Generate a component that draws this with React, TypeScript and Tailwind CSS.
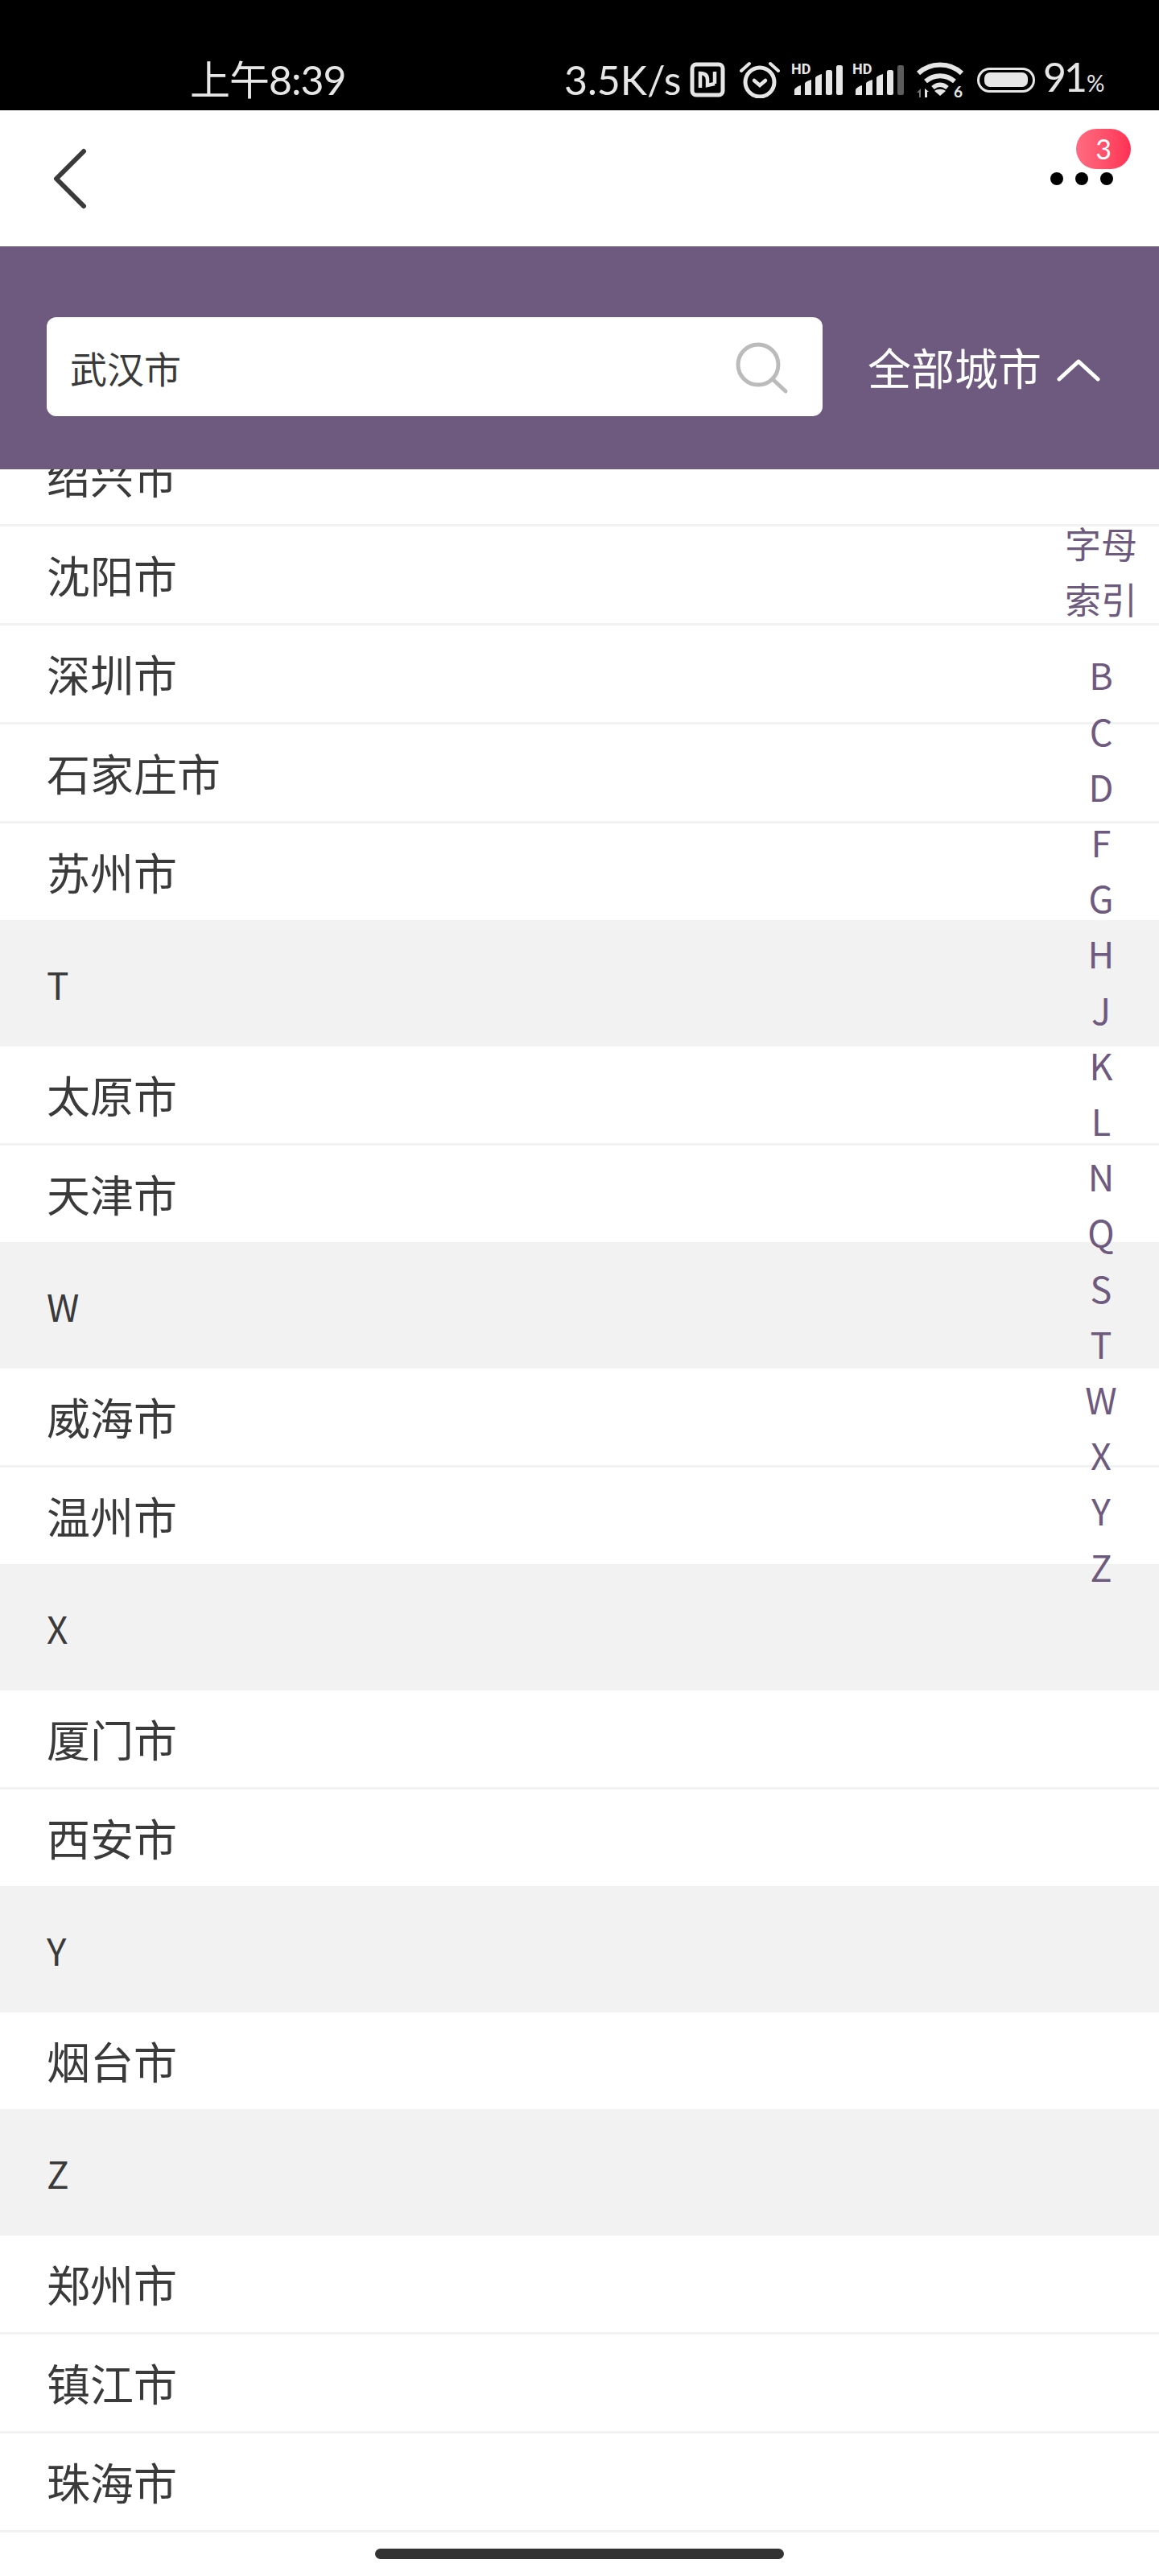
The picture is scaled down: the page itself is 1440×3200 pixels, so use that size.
const sections: { letter?: string; cities: string[] }[] = [
  { cities: ["绍兴市", "沈阳市", "深圳市", "石家庄市", "苏州市"] },
  { letter: "T", cities: ["太原市", "天津市"] },
  { letter: "W", cities: ["威海市", "温州市"] },
  { letter: "X", cities: ["厦门市", "西安市"] },
  { letter: "Y", cities: ["烟台市"] },
  { letter: "Z", cities: ["郑州市", "镇江市", "珠海市"] },
];

const letters = ["B", "C", "D", "F", "G", "H", "J", "K", "L", "N", "Q", "S", "T", "W", "X", "Y", "Z"];

function NfcIcon() {
  return (
    <svg width="44" height="44" viewBox="0 0 44 44" fill="none" stroke="#e6e6e6">
      <rect x="3" y="3" width="38" height="38" rx="5" strokeWidth="5" />
      <path d="M13 32V14c5 0 9 2 9 8v7l9-2M31 12v15" strokeWidth="4.5" />
    </svg>
  );
}

function AlarmIcon() {
  return (
    <svg width="50" height="46" viewBox="0 0 50 46" fill="none" stroke="#e6e6e6" strokeLinecap="round">
      <circle cx="25" cy="26" r="18" strokeWidth="5" />
      <path d="M18 24l7 6 7-6" strokeWidth="4.5" />
      <path d="M2 12L12 3M48 12L38 3" strokeWidth="4" />
    </svg>
  );
}

function SignalIcon({ dim }: { dim?: boolean }) {
  return (
    <svg className="overflow-visible" width="66" height="42" viewBox="0 0 66 42" fill="#e6e6e6">
      <text x="1" y="14" fontSize="18" fontWeight="700" fontFamily="Roboto, sans-serif">HD</text>
      <path d="M5 40v-6c0-2 4-5 8-6v12zM18 40V26c0-2 4-4 8-5v19zM31 40V19c0-2 4-4 8-5v26z" />
      <rect x="44" y="9" width="8" height="31" rx="2.5" />
      <rect x="57" y="3" width="8" height="37" rx="2.5" fill={dim ? "#5c5c5c" : "#e6e6e6"} />
    </svg>
  );
}

function WifiIcon() {
  return (
    <svg className="overflow-visible" width="60" height="46" viewBox="0 0 60 46" fill="none">
      <path d="M3 15C18 1 42 1 57 15" stroke="#e6e6e6" strokeWidth="6" />
      <path d="M12 25c11-9 25-9 36 0" stroke="#e6e6e6" strokeWidth="6" />
      <path d="M21 33c6-5 12-5 18 0" stroke="#e6e6e6" strokeWidth="5.5" />
      <path d="M30 43l-7-6c4-3 10-3 14 0z" fill="#e6e6e6" />
      <path d="M4 45v-6H1l5-5v11z" fill="#777777" />
      <path d="M11 45V34l5 4h-2v7z" fill="#e6e6e6" />
      <text x="47" y="45" fontSize="19" fontWeight="700" fill="#e6e6e6" fontFamily="Lato, sans-serif">6</text>
    </svg>
  );
}

function BatteryIcon() {
  return (
    <div className="flex h-[31px] w-[72px] items-center rounded-[16px] border-[3px] border-[#e6e6e6] px-[6px]">
      <div className="h-[18px] w-full rounded-[7px] bg-[#e6e6e6]" />
    </div>
  );
}

function StatusBar() {
  return (
    <div className="flex h-[137px] items-start bg-black pl-[236px] pt-[69px] font-['Lato','Noto_Sans_CJK_SC',sans-serif] text-[#e6e6e6]">
      <span className="w-[465px] text-[50px] leading-[60px] tracking-[-1px]">上午8:39</span>
      <div className="flex h-[60px] items-center">
        <span className="w-[146px] text-[50px] leading-[60px]">3.5K/s</span>
        <div className="ml-[10px]">
          <NfcIcon />
        </div>
        <div className="ml-[18px]">
          <AlarmIcon />
        </div>
        <div className="ml-[13px]">
          <SignalIcon />
        </div>
        <div className="ml-[10px]">
          <SignalIcon dim />
        </div>
        <div className="ml-[14px]">
          <WifiIcon />
        </div>
        <div className="ml-[16px]">
          <BatteryIcon />
        </div>
        <div className="ml-[10px] flex items-baseline">
          <span className="text-[50px] leading-[60px] tracking-[-3px]">91</span>
          <span className="ml-[2px] text-[28px] leading-[60px]">%</span>
        </div>
      </div>
    </div>
  );
}

function NavBar() {
  return (
    <div className="relative flex h-[169px] items-center justify-between bg-white pl-[66px] pr-[57px]">
      <svg width="46" height="76" viewBox="0 0 46 76" fill="none" stroke="#3a3a3a" strokeWidth="6" strokeLinecap="round" strokeLinejoin="round">
        <path d="M38 4L4 38l34 34" />
      </svg>
      <div className="flex gap-[15px]">
        <div className="h-[16px] w-[16px] rounded-full bg-black" />
        <div className="h-[16px] w-[16px] rounded-full bg-black" />
        <div className="h-[16px] w-[16px] rounded-full bg-black" />
      </div>
      <div className="absolute left-[1337px] top-[23px] flex h-[50px] w-[68px] items-center justify-center rounded-full bg-gradient-to-r from-[#ff6b82] to-[#ff2f55] font-['Lato',sans-serif] text-[34px] leading-none text-white">
        3
      </div>
    </div>
  );
}

function SearchBar() {
  return (
    <div className="flex h-[277px] items-center bg-[#6e5a7e] pl-[58px] pt-[22px]">
      <div className="flex h-[123px] w-[964px] items-center justify-between rounded-[12px] bg-white pl-[29px] pr-[40px]">
        <span className="text-[46px] leading-none text-[#3a3a3a]">武汉市</span>
        <svg width="70" height="68" viewBox="0 0 70 68" fill="none" stroke="#bbbbbb" strokeWidth="5" strokeLinecap="round">
          <circle cx="30" cy="31" r="25" />
          <path d="M49 50l15 14" />
        </svg>
      </div>
      <span className="ml-[56px] text-[54px] leading-none text-white">全部城市</span>
      <svg className="ml-[19px] mt-[9px]" width="54" height="28" viewBox="0 0 54 28" fill="none" stroke="#ffffff" strokeWidth="5" strokeLinecap="round" strokeLinejoin="round">
        <path d="M3 25L27 3l24 22" />
      </svg>
    </div>
  );
}

function CityList() {
  return (
    <div className="h-[2617px] overflow-hidden bg-white">
      <div className="-mt-[52px]">
        {sections.map((section, i) => (
          <div key={i}>
            {section.letter && (
              <div className="flex h-[157px] items-center bg-[#f2f2f2] pl-[58px] text-[46px] leading-none text-[#3a3a3a]">
                {section.letter}
              </div>
            )}
            {section.cities.map((city, j) => (
              <div
                key={city}
                className={
                  j === section.cities.length - 1 && i !== sections.length - 1
                    ? "flex h-[120px] items-center pl-[58px] text-[54px] leading-none text-[#3a3a3a]"
                    : "flex h-[123px] items-center border-b-[3px] border-[#f2f2f2] pl-[58px] text-[54px] leading-none text-[#3a3a3a]"
                }
              >
                {city}
              </div>
            ))}
          </div>
        ))}
      </div>
    </div>
  );
}

function LetterIndex() {
  return (
    <div className="absolute left-[1300px] top-[640px] flex w-[140px] flex-col items-center pr-[4px] text-[45px] leading-[69.2px] text-[#6e5a7e]">
      <div className="mb-[25px] w-[90px] text-center">字母索引</div>
      {letters.map((letter) => (
        <div key={letter}>{letter}</div>
      ))}
    </div>
  );
}

export default function App() {
  return (
    <div className="relative h-[3200px] w-[1440px] overflow-hidden bg-white font-['Noto_Sans_CJK_SC',sans-serif]">
      <StatusBar />
      <NavBar />
      <SearchBar />
      <CityList />
      <LetterIndex />
      <div className="absolute bottom-[21px] left-[466px] h-[13px] w-[508px] rounded-full bg-[#333333]" />
    </div>
  );
}
